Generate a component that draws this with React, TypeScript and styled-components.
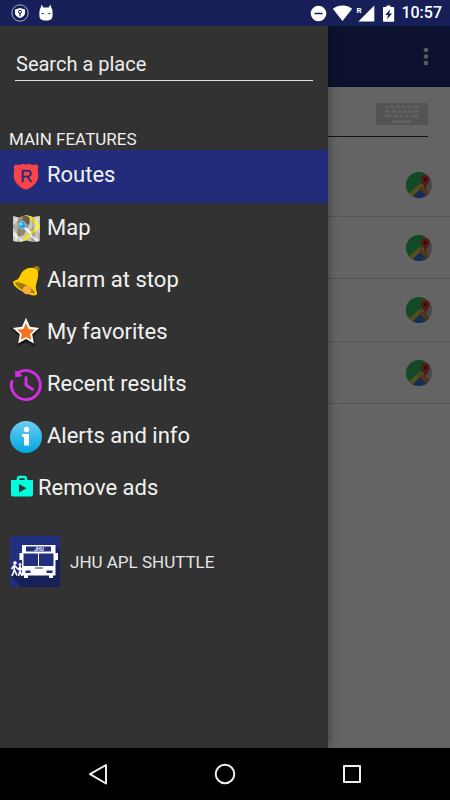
import React from "react";
import styled, { createGlobalStyle } from "styled-components";

const GlobalStyle = createGlobalStyle`
  * { box-sizing: border-box; }
  body { margin: 0; background: #000; font-family: Roboto, "Liberation Sans", sans-serif; }
  button, input { font: inherit; color: inherit; border: 0; background: none; padding: 0; margin: 0; }
  svg { display: block; flex: none; overflow: visible; }
`;

const Screen = styled.div`
  min-height: 100vh;
  display: flex;
  flex-direction: column;
`;

const StatusBar = styled.header`
  height: 26px;
  display: flex;
  align-items: center;
  justify-content: space-between;
  padding: 0 8px 0 11px;
  background: #161f57;
  color: #fff;
`;

const StatusGroup = styled.div<{ $gap: number }>`
  display: flex;
  align-items: center;
  gap: ${(p) => p.$gap}px;
`;

const Clock = styled.time`
  font-size: 16px;
  line-height: 26px;
  font-weight: 500;
`;

const Stage = styled.div`
  position: relative;
  flex: 1;
  display: flex;
  flex-direction: column;
`;

const Page = styled.main`
  flex: 1;
  background: #fafafa;
`;

const Toolbar = styled.div`
  height: 61px;
  display: flex;
  align-items: center;
  justify-content: flex-end;
  padding-right: 16px;
  background: #202b78;
  border-bottom: 1px solid #1a2080;
  color: #e4e4e4;
`;

const IconButton = styled.button`
  display: flex;
  align-items: center;
  justify-content: center;
`;

const FilterBar = styled.div`
  height: 50px;
  margin: 0 22px 0 16px;
  display: flex;
  align-items: center;
  justify-content: flex-end;
  padding-top: 4px;
  border-bottom: 1px solid #333;
`;

const RouteList = styled.ul`
  list-style: none;
  margin: 0;
  padding: 17px 0 0;
`;

const RouteRow = styled.li`
  height: 62px;
  display: flex;
  align-items: center;
  justify-content: flex-end;
  padding-right: 18px;
  border-bottom: 1px solid #d4d4d4;

  &:nth-child(odd) { height: 63px; }
`;

const Scrim = styled.div`
  position: absolute;
  inset: 0;
  background: rgba(0, 0, 0, 0.6);
`;

const Drawer = styled.aside`
  position: absolute;
  top: 0;
  bottom: 0;
  left: 0;
  width: 328px;
  max-width: 85%;
  background: #323232;
  color: #f2f2f2;
  box-shadow: 0 0 10px rgba(0, 0, 0, 0.4);
  clip-path: inset(0 -16px 0 0);
`;

const SearchInput = styled.input`
  display: block;
  width: calc(100% - 30px);
  height: 32px;
  margin: 23px 15px 0;
  padding: 0 1px 2px;
  border-bottom: 1px solid #e0e0e0;
  font-size: 20px;
  outline: none;

  &::placeholder { color: #eee; opacity: 1; }
`;

const SectionTitle = styled.h2`
  margin: 48px 9px 0;
  font-size: 17px;
  line-height: 21px;
  font-weight: 400;
  color: #eee;
`;

const MenuItem = styled.button<{ $selected?: boolean; $gap: number }>`
  width: 100%;
  height: ${(p) => (p.$selected ? 53 : 52)}px;
  display: flex;
  align-items: center;
  gap: ${(p) => p.$gap}px;
  padding: 0 10px;
  text-align: left;
  background: ${(p) => (p.$selected ? "#222c7a" : "transparent")};
`;

const MenuLabel = styled.span`
  font-size: 22px;
  line-height: 28px;
  padding-bottom: 3px;
`;

const Agency = styled.div`
  display: flex;
  align-items: center;
  gap: 10px;
  padding: 21px 10px 0;
  font-size: 17px;
  line-height: 24px;
  color: #e4e4e4;
`;

const NavBar = styled.nav`
  height: 52px;
  display: flex;
  align-items: center;
  justify-content: center;
  gap: 101px;
  background: #000;
`;

const NavButton = styled(IconButton)`
  width: 26px;
  height: 26px;
`;

const ShieldBadge = () => (
  <svg width="18" height="18" viewBox="0 0 18 18">
    <circle cx="9" cy="9" r="8.2" fill="none" stroke="#b9bdd4" strokeWidth="0.9" />
    <path d="M9 4 14 5.400V9c0 2.500-2.200 4-5 5-2.800-1-5-2.500-5-5V5.400Z" fill="#fff" />
    <circle cx="9" cy="7.800" r="1.500" fill="none" stroke="#161f57" strokeWidth="1" />
    <path d="M9 9v3.200" stroke="#161f57" strokeWidth="1.200" />
  </svg>
);

const CatHead = () => (
  <svg width="14" height="18" viewBox="0 0 14 18">
    <path d="M2.600.5 4.300 3.600h5.400L11.400.5l1 3.600c.9.600 1.200 2.500 1.200 6.900 0 4-1.500 5.500-6.600 5.500S.4 15 .4 11c0-4.400.3-6.300 1.200-6.900Z" fill="#fff" />
    <path d="M2.700 9.500h2M9.300 9.500h2" stroke="#161f57" strokeWidth="1.200" />
  </svg>
);

const DoNotDisturb = () => (
  <svg width="16" height="16" viewBox="0 0 16 16">
    <circle cx="7.500" cy="8.500" r="7.800" fill="#fff" />
    <path d="M3.500 8.500h8" stroke="#161f57" strokeWidth="1.500" />
  </svg>
);

const Wifi = () => (
  <svg width="20" height="16" viewBox="0 0 20 16">
    <path d="M9.500 16 -.2 3.800C2.500 1.600 5.700.4 9.500.4s7 1.200 9.700 3.400Z" fill="#fff" />
  </svg>
);

const Signal = () => (
  <svg width="18" height="17" viewBox="0 0 18 17">
    <path d="M15.300.5V16.500H-.7Z" fill="#fff" />
    <text x="-2.500" y="7.500" fontFamily="Roboto, sans-serif" fontSize="8" fontWeight="700" fill="#fff">R</text>
  </svg>
);

const Battery = () => (
  <svg width="12" height="17" viewBox="0 0 12 17">
    <path d="M3.500.5h4v1.500h3a.7.700 0 0 1 .7.700V16a.7.700 0 0 1-.7.700H.700a.7.700 0 0 1-.7-.7V2.700A.7.700 0 0 1 .7 2h2.800Z" fill="#fff" />
    <path d="M7.200 4.300 2.300 10h2.700l-.8 4.300L9 8.600H6.200Z" fill="#161f57" />
  </svg>
);

const MoreDots = () => (
  <svg width="16" height="20" viewBox="0 0 16 20" fill="currentColor">
    <circle cx="8" cy="4" r="2.300" />
    <circle cx="8" cy="10.500" r="2.300" />
    <circle cx="8" cy="17" r="2.300" />
  </svg>
);

const Keyboard = () => (
  <svg width="52" height="22" viewBox="0 0 52 22">
    <rect width="52" height="22" rx="1.500" fill="#d2d2d2" />
    <g stroke="#f0f0f0" strokeWidth="2.800">
      <path d="M9 3.700h3M14 3.700h4M19.700 3.700h3.800M25.300 3.700h3.800M31 3.700h4M37 3.700h6" />
      <path d="M9 8.500h5M16 8.500h4M21.700 8.500h4M27.300 8.500h3.500M32.500 8.500h4M38.300 8.500H43" />
      <path d="M9 13h7M17.700 13h4M23.300 13h4M29 13h4M35 13h8M16 18.500h19" />
    </g>
  </svg>
);

const MapsLogo = ({ id }: { id: string }) => (
  <svg width="26" height="26" viewBox="0 0 26 26">
    <clipPath id={id}><circle cx="13" cy="13" r="13" /></clipPath>
    <g clipPath={`url(#${id})`}>
      <path d="M0 0h26v26H0Z" fill="#b4b4b4" />
      <path d="M0 0h19v11L3 25H0Z" fill="#2fb862" />
      <path d="m13 16 10 10H3Z" fill="#3573d6" />
      <path d="m14.500 11.500 2.500 2.500L4 27 0 24Z" fill="#e0c13e" />
      <path d="m13 16 2.800-2.800L26 23l-3 3Z" fill="#d18438" />
      <path d="M16 12.500 19.500 17l1-4Z" fill="#e4e4e4" />
    </g>
    <path d="M19.300 3a4.500 4.500 0 0 1 4.500 4.500c0 3.500-3.700 4.500-4.200 10.500h-.6c-.5-6-4.200-7-4.200-10.500A4.500 4.500 0 0 1 19.300 3Z" fill="#d54238" />
    <circle cx="19.300" cy="7.400" r="1.600" fill="#6b1d18" />
  </svg>
);

const RouteShield = () => (
  <svg width="32" height="32" viewBox="0 0 32 32">
    <path d="M5.500 3.300c2 1 4.500.9 6-.1 1.500-.5 2.800-.4 4.500.4 1.700-.8 3-.9 4.500-.4 1.500 1 4 1.100 6 .1l2 2.900c-1 2-.9 4-.3 6.300C29.300 18.500 25 25.500 16 28.800 7 25.500 2.700 18.500 3.800 12.500c.6-2.300.7-4.300-.3-6.300Z" fill="#fc4349" />
    <text x="16.500" y="21" textAnchor="middle" fontFamily="Liberation Sans, Arial, sans-serif" fontSize="17" fill="#222c7a" stroke="#222c7a" strokeWidth="0.300">R</text>
  </svg>
);

const MapTile = () => (
  <svg width="32" height="32" viewBox="0 0 32 32">
    <clipPath id="sheet"><path d="m3 3 6 1.500L16 2l7 2 7-1v25l-7 1-7-1.500L9 29l-6-1Z" /></clipPath>
    <g clipPath="url(#sheet)">
      <path d="M0 0h32v32H0Z" fill="#c9c6bd" />
      <path d="M3 13 13 2l7 7-6 13-6 2Z" fill="#978770" />
      <path d="m13 2 7 2-1 8-6-4Z" fill="#6d5c48" />
      <path d="m18 19 5-5 7 7v9h-8Z" fill="#aaa69d" />
      <path d="M18 1 30 15M30 12 11 30" stroke="#eee616" strokeWidth="3" />
      <path d="M3 20 13 29M20 22l8 6" stroke="#e9e8e4" strokeWidth="2.500" />
      <path d="M6 3v27M27 3v27" stroke="#fff" strokeOpacity="0.350" strokeWidth="3" />
      <path d="M9 3v27M23 3v27" stroke="#565044" strokeOpacity="0.350" />
    </g>
    <path d="m15.500 15.500 4.500 4" stroke="#f6f6f6" strokeWidth="2.500" strokeLinecap="round" />
    <circle cx="12" cy="12" r="3.800" fill="#249ee8" stroke="#9ccfe8" strokeWidth="0.800" />
    <circle cx="11" cy="11" r="1.600" fill="#8ee0fb" />
  </svg>
);

const Bell = () => (
  <svg width="32" height="32" viewBox="0 0 32 32">
    <circle cx="26.500" cy="4" r="3" fill="#a17b10" />
    <path d="M13 6C17 2.500 23 1.500 26.500 4.500c4 4.500 0 11-.7 18 0 3 2 5 1 7-1.500 2-8 .5-14.300-3S2.500 19.500 3.200 17c.8-2 4-1.500 5.600-4C10.500 10 11 8 13 6Z" fill="#fc0" />
    <path d="M5 17.500c6-1.300 18 5 20 10.500-5 2-19-5-20-10.500Z" fill="#a17b10" />
    <circle cx="17" cy="25" r="4.300" fill="#fbae3c" />
  </svg>
);

const Star = () => (
  <svg width="32" height="32" viewBox="0 0 32 32">
    <path d="m16 3 4 8 10 1-7.500 6.500 2 10.500L16 25l-8.500 4 2-10.500L2 12l10-1Z" fill="#151515" stroke="#202020" strokeWidth="1.500" />
    <path d="m16 .8 4 8.900 9.200 1.300-7 6.300 1.700 9.200L16 22 8.100 26.500l1.700-9.200-7-6.300L12 9.700Z" fill="#fff" />
    <path d="m16 6 2.600 6 6.100.7-4.600 4.200 1.300 6.200-5.400-3.200-5.400 3.200 1.300-6.200-4.600-4.200 6.100-.7Z" fill="#f47421" />
  </svg>
);

const History = () => (
  <svg width="32" height="32" viewBox="0 0 32 32" fill="none" stroke="#d62ee6" strokeWidth="2.800">
    <path d="M7.500 4.200a14.500 14.500 0 1 1-5.300 7" />
    <path d="M5.500 1.500 12.500 6.500 5.500 8Z" fill="#d62ee6" stroke="none" />
    <path d="M6.300 2v4.800h5" strokeWidth="1.800" />
    <path d="M16 7.500v8.500l7.500 5" />
  </svg>
);

const Info = () => (
  <svg width="32" height="32" viewBox="0 0 32 32">
    <defs>
      <linearGradient id="sky" x1="0" y1="0" x2="0" y2="1">
        <stop offset="0" stopColor="#6bd0f3" />
        <stop offset="1" stopColor="#00a5df" />
      </linearGradient>
    </defs>
    <circle cx="16" cy="16" r="16" fill="url(#sky)" />
    <circle cx="16.500" cy="8.500" r="2.700" fill="#fff" />
    <path d="M12 13h7v11.500h-5V16h-2Z" fill="#fff" />
  </svg>
);

const ShopBag = () => (
  <svg width="24" height="24" viewBox="0 0 24 24">
    <path d="M8 3V1.500A1.500 1.500 0 0 1 9.500 0h5A1.500 1.500 0 0 1 16 1.500V3" fill="none" stroke="#0fd" strokeWidth="2.400" />
    <path d="M1 3h22v14.500a2 2 0 0 1-2 2H3a2 2 0 0 1-2-2Z" fill="#0fd" />
    <path d="M9 7v8.500l7.500-4.300Z" fill="#323232" />
  </svg>
);

const BusLogo = () => (
  <svg width="50" height="51" viewBox="0 0 50 51">
    <rect width="50" height="51" rx="2.500" fill="#222e7e" />
    <path d="M46 11 50 15v33.500a2.500 2.500 0 0 1-2.500 2.500H11L1 40l12-4Z" fill="#182058" />
    <path d="M12 9h33.500v8H48v7h-2.500v15.500H43v2.500h-4V39.500H18v2.500h-4V39.500h-2V24H9.500v-7H12Z" fill="#fff" />
    <path d="M16 10.500h25v5H16Z" fill="#222e7e" />
    <text x="29" y="15" textAnchor="middle" fontFamily="Roboto, sans-serif" fontSize="5" fontWeight="700" fill="#fff">JHU</text>
    <path d="M13.500 17.500h14.500v12.500H13.500ZM29 17.500h14.500v12.500H29ZM15.500 34.500h5v2.500h-5ZM36.500 34.500h6v2.500h-6ZM25 31.500h8v1h-8Z" fill="#222e7e" />
    <g fill="#fff" stroke="#fff">
      <circle cx="5" cy="27" r="1.300" />
      <circle cx="10" cy="28.500" r="1" />
      <path d="m4.500 29-.5 6-2 5M4.500 34l2.500 5.500M4.500 29 1.500 33M5 30l3 3M10 30v5l-1.500 5M10 35l2 5M10 31l-2 3M10 31l2 3" strokeWidth="1.600" fill="none" />
    </g>
  </svg>
);

const features = [
  { label: "Routes", icon: <RouteShield />, selected: true, gap: 5 },
  { label: "Map", icon: <MapTile />, gap: 5 },
  { label: "Alarm at stop", icon: <Bell />, gap: 5 },
  { label: "My favorites", icon: <Star />, gap: 5 },
  { label: "Recent results", icon: <History />, gap: 5 },
  { label: "Alerts and info", icon: <Info />, gap: 5 },
  { label: "Remove ads", icon: <ShopBag />, gap: 4 },
];

const routes = ["route-1", "route-2", "route-3", "route-4"];

export default function App() {
  return (
    <Screen>
      <GlobalStyle />
      <StatusBar>
        <StatusGroup $gap={10}>
          <ShieldBadge />
          <CatHead />
        </StatusGroup>
        <StatusGroup $gap={6}>
          <DoNotDisturb />
          <Wifi />
          <Signal />
          <Battery />
          <Clock>10:57</Clock>
        </StatusGroup>
      </StatusBar>
      <Stage>
        <Page>
          <Toolbar>
            <IconButton aria-label="More options"><MoreDots /></IconButton>
          </Toolbar>
          <FilterBar>
            <IconButton aria-label="Keyboard"><Keyboard /></IconButton>
          </FilterBar>
          <RouteList>
            {routes.map((id) => (
              <RouteRow key={id}>
                <IconButton aria-label="Open in maps"><MapsLogo id={id} /></IconButton>
              </RouteRow>
            ))}
          </RouteList>
        </Page>
        <Scrim />
        <Drawer>
          <SearchInput type="text" placeholder="Search a place" aria-label="Search a place" />
          <SectionTitle>MAIN FEATURES</SectionTitle>
          {features.map((f) => (
            <MenuItem key={f.label} $selected={f.selected} $gap={f.gap}>
              {f.icon}
              <MenuLabel>{f.label}</MenuLabel>
            </MenuItem>
          ))}
          <Agency>
            <BusLogo />
            <span>JHU APL SHUTTLE</span>
          </Agency>
        </Drawer>
      </Stage>
      <NavBar>
        <NavButton aria-label="Back">
          <svg width="26" height="26" viewBox="0 0 26 26" fill="none" stroke="#eee" strokeWidth="2" strokeLinejoin="round">
            <path d="M21 4v18.500L5 13.200Z" />
          </svg>
        </NavButton>
        <NavButton aria-label="Home">
          <svg width="26" height="26" viewBox="0 0 26 26" fill="none" stroke="#eee" strokeWidth="2">
            <circle cx="13" cy="13" r="9.300" />
          </svg>
        </NavButton>
        <NavButton aria-label="Recent apps">
          <svg width="26" height="26" viewBox="0 0 26 26" fill="none" stroke="#eee" strokeWidth="2" strokeLinejoin="round">
            <path d="M5 5h16v16h-16Z" />
          </svg>
        </NavButton>
      </NavBar>
    </Screen>
  );
}
